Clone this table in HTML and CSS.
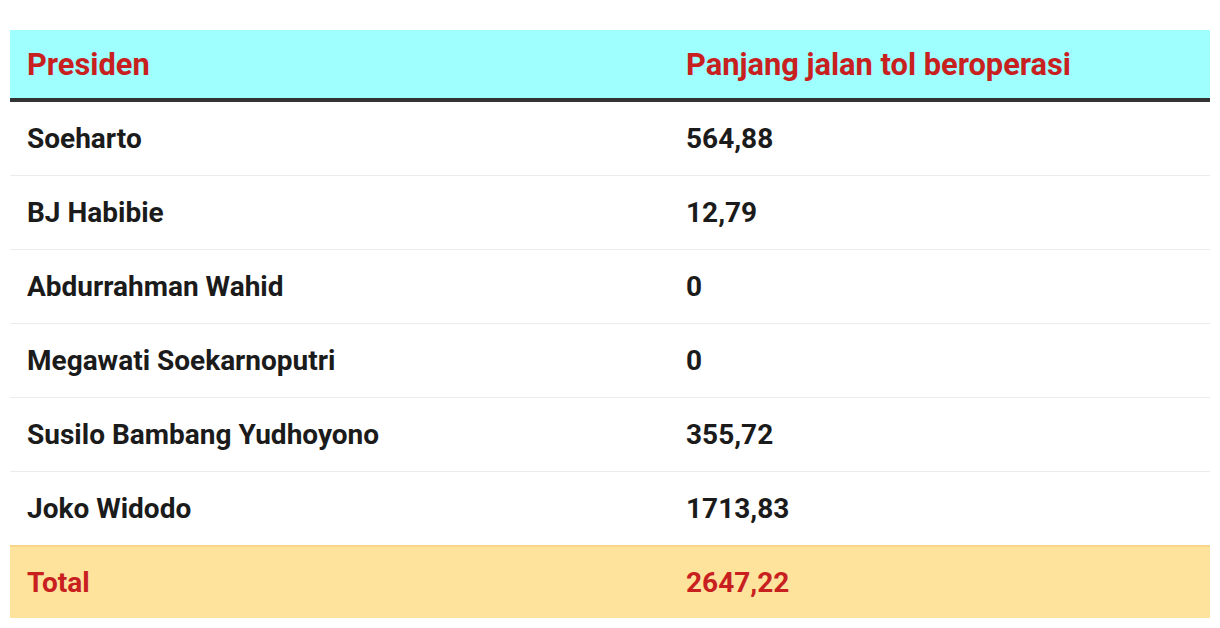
FILE: index.html
```html
<!DOCTYPE html>
<html lang="id">
<head>
<meta charset="utf-8">
<link rel="stylesheet" href="styles.css">
</head>
<body>
<table class="toll">
  <colgroup><col class="c1"><col class="c2"></colgroup>
  <thead>
    <tr><th>Presiden</th><th>Panjang jalan tol beroperasi</th></tr>
  </thead>
  <tbody>
    <tr><td>Soeharto</td><td>564,88</td></tr>
    <tr><td>BJ Habibie</td><td>12,79</td></tr>
    <tr><td>Abdurrahman Wahid</td><td>0</td></tr>
    <tr><td>Megawati Soekarnoputri</td><td>0</td></tr>
    <tr><td>Susilo Bambang Yudhoyono</td><td>355,72</td></tr>
    <tr><td>Joko Widodo</td><td>1713,83</td></tr>
  </tbody>
  <tfoot>
    <tr><td>Total</td><td>2647,22</td></tr>
  </tfoot>
</table>
</body>
</html>
```
FILE: styles.css
```css
html, body { margin: 0; padding: 0; background: #fff; }
body { padding: 30px 10px 0 10px; font-family: Roboto, "Liberation Sans", sans-serif; }
.toll { width: 1200px; border-collapse: collapse; table-layout: fixed; }
.toll .c1 { width: 659px; }
.toll th, .toll td { text-align: left; font-weight: 700; font-size: 28px; padding: 0 0 0 17px; }
.toll thead th { background: #9ffffe; color: #c8201f; font-size: 30.8px; height: 68px; border-bottom: 4px solid #333; }
.toll tbody td { color: #1b1b1b; height: 73px; border-bottom: 1px solid #ececec; }
.toll tbody tr:last-child td { border-bottom: none; }
.toll tfoot td { background: #fee39d; color: #c8201f; height: 71px; border-top: 2px solid #f7d58a; }
```
